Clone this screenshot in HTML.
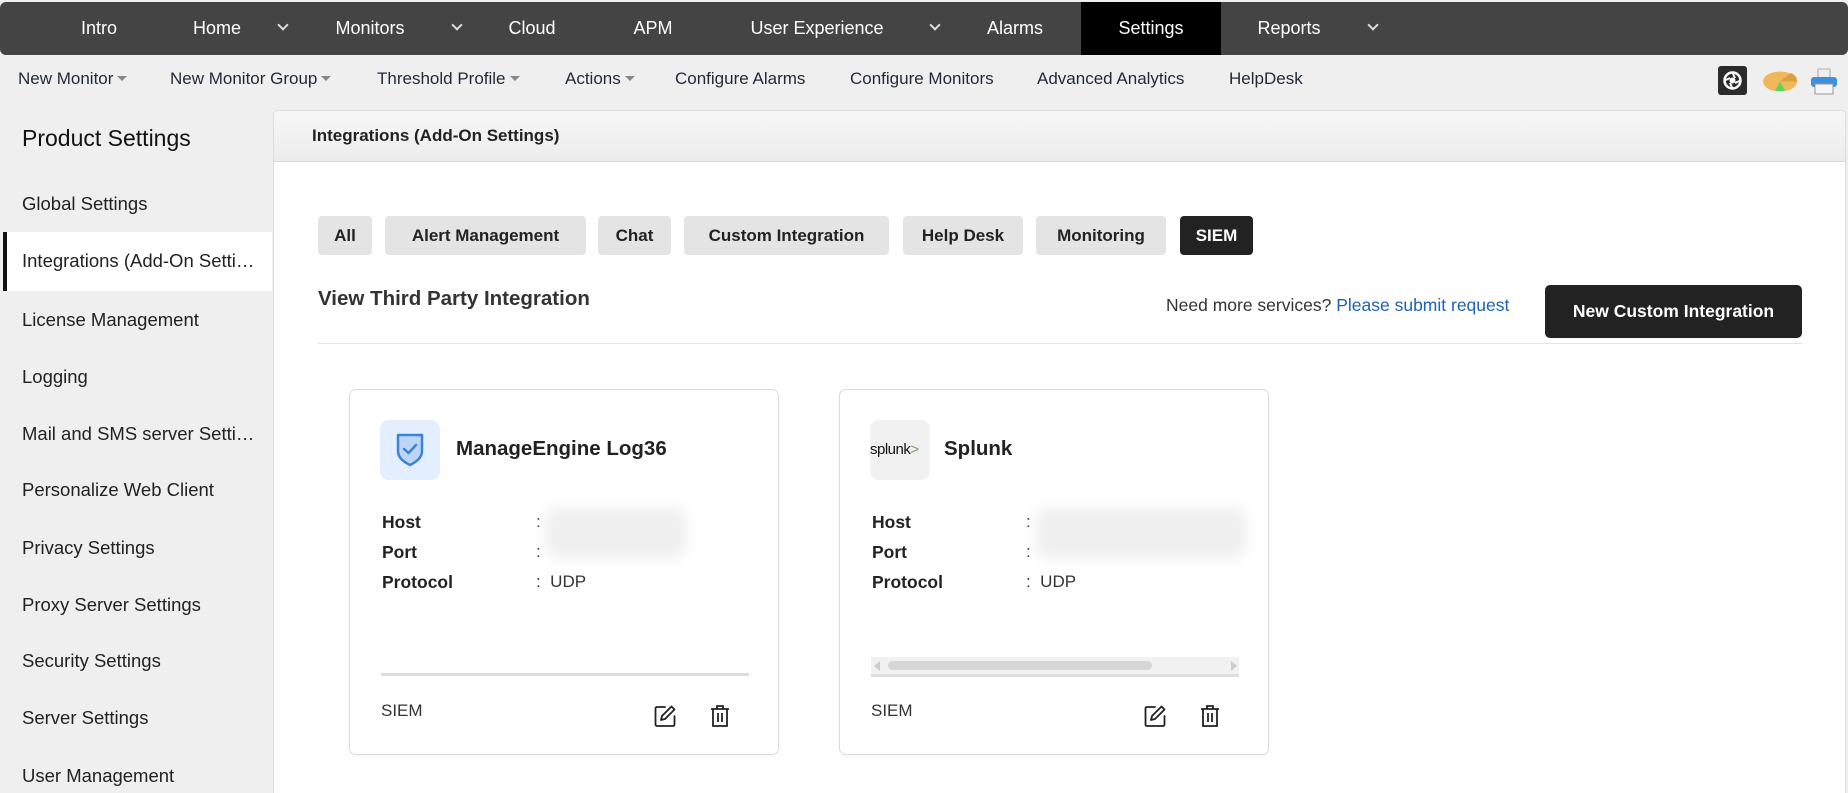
<!DOCTYPE html>
<html><head><meta charset="utf-8">
<style>
*{margin:0;padding:0;box-sizing:border-box}
html,body{width:1848px;height:793px;overflow:hidden}
body{background:#efefef;font-family:"Liberation Sans",Arial,sans-serif;position:relative;color:#222}
.a{position:absolute;white-space:nowrap}
#top{position:absolute;left:0;top:2px;width:1848px;height:53px;background:#444;border-radius:6px}
.tn{position:absolute;top:0;height:53px;line-height:53px;color:#fff;font-size:18px;transform:translateX(-50%)}
.chev{position:absolute;top:22px;width:8px;height:8px;border-right:2px solid #ddd;border-bottom:2px solid #ddd;transform:rotate(45deg)}
.n2{position:absolute;top:69px;font-size:17px;color:#1f2a36}
.tri{display:inline-block;width:0;height:0;border-left:5px solid transparent;border-right:5px solid transparent;border-top:5px solid #888;margin-left:4px;vertical-align:3px}
.si{position:absolute;left:22px;font-size:18.5px;color:#222}
.tab{position:absolute;top:216px;height:39px;line-height:39px;background:#e4e4e4;border-radius:4px;font-weight:bold;font-size:17px;color:#222;text-align:center}
.card{position:absolute;top:389px;width:430px;height:366px;background:#fff;border:1px solid #ddd;border-radius:7px;box-shadow:0 1px 3px rgba(0,0,0,.06)}
.lb{position:absolute;left:32px;font-weight:bold;font-size:17.5px;color:#222}
.cl{position:absolute;left:186px;font-size:17px;color:#333}
.blur{position:absolute;top:118px;height:50px;background:#efefef;filter:blur(7px);border-radius:10px}
</style></head><body>
<div id="top">
 <div class="tn" style="left:99px">Intro</div>
 <div class="tn" style="left:217px">Home</div><div class="chev" style="left:279px;top:19px"></div>
 <div class="tn" style="left:370px">Monitors</div><div class="chev" style="left:453px;top:19px"></div>
 <div class="tn" style="left:532px">Cloud</div>
 <div class="tn" style="left:653px">APM</div>
 <div class="tn" style="left:817px">User Experience</div><div class="chev" style="left:931px;top:19px"></div>
 <div class="tn" style="left:1015px">Alarms</div>
 <div style="position:absolute;left:1081px;top:0;width:140px;height:53px;background:#000"></div>
 <div class="tn" style="left:1151px">Settings</div>
 <div class="tn" style="left:1289px">Reports</div><div class="chev" style="left:1369px;top:19px"></div>
</div>
<div class="n2" style="left:18px">New Monitor<span class="tri"></span></div>
<div class="n2" style="left:170px">New Monitor Group<span class="tri"></span></div>
<div class="n2" style="left:377px">Threshold Profile<span class="tri"></span></div>
<div class="n2" style="left:565px">Actions<span class="tri"></span></div>
<div class="n2" style="left:675px">Configure Alarms</div>
<div class="n2" style="left:850px">Configure Monitors</div>
<div class="n2" style="left:1037px">Advanced Analytics</div>
<div class="n2" style="left:1229px">HelpDesk</div>
<div class="a" style="left:1718px;top:66px;width:29px;height:29px;background:#2b2b2b;border-radius:3px">
 <svg width="29" height="29" viewBox="0 0 29 29"><circle cx="14.5" cy="14.5" r="8" fill="none" stroke="#fff" stroke-width="2.5"/><circle cx="14.5" cy="14.5" r="3" fill="#fff"/><path d="M14.5 6.5L17 12M22.5 14.5L17 17M14.5 22.5L12 17M6.5 14.5L12 12" stroke="#fff" stroke-width="2"/></svg></div>
<div class="a" style="left:1763px;top:70px"><svg width="35" height="23"><ellipse cx="17" cy="11.5" rx="17" ry="10" fill="#f0b85a"/><path d="M17 11.5L12 21L22 21Z" fill="#5fd35f"/><path d="M17 11.5L34 11.5A17 10 0 0 0 28 3Z" fill="#d9a040"/></svg></div>
<div class="a" style="left:1810px;top:68px"><svg width="28" height="27"><rect x="8" y="1" width="12" height="9" fill="#eee" stroke="#aaa"/><rect x="1" y="9" width="26" height="10" rx="3" fill="#3f8fdc"/><rect x="5" y="16" width="18" height="10" fill="#f5f5f5" stroke="#999"/></svg></div>

<div class="a" style="left:22px;top:125px;font-size:23px;color:#111">Product Settings</div>
<div class="a" style="left:3px;top:232px;width:269px;height:59px;background:#fff;border-left:4px solid #111"></div>
<div class="si" style="top:193px">Global Settings</div>
<div class="si" style="top:250px">Integrations (Add-On Setti…</div>
<div class="si" style="top:309px">License Management</div>
<div class="si" style="top:366px">Logging</div>
<div class="si" style="top:423px">Mail and SMS server Setti…</div>
<div class="si" style="top:479px">Personalize Web Client</div>
<div class="si" style="top:537px">Privacy Settings</div>
<div class="si" style="top:594px">Proxy Server Settings</div>
<div class="si" style="top:650px">Security Settings</div>
<div class="si" style="top:707px">Server Settings</div>
<div class="si" style="top:765px">User Management</div>

<div class="a" style="left:273px;top:110px;width:1573px;height:683px;background:#fff;border:1px solid #ddd;border-bottom:none;border-radius:5px 5px 0 0"></div>
<div class="a" style="left:274px;top:111px;width:1571px;height:51px;background:linear-gradient(#f7f7f7,#ececec);border-bottom:1px solid #d8d8d8;border-radius:5px 5px 0 0"></div>
<div class="a" style="left:312px;top:126px;font-size:17px;font-weight:bold;color:#222">Integrations (Add-On Settings)</div>

<div class="tab" style="left:318px;width:54px">All</div>
<div class="tab" style="left:385px;width:201px">Alert Management</div>
<div class="tab" style="left:598px;width:73px">Chat</div>
<div class="tab" style="left:684px;width:205px">Custom Integration</div>
<div class="tab" style="left:903px;width:120px">Help Desk</div>
<div class="tab" style="left:1036px;width:130px">Monitoring</div>
<div class="tab" style="left:1180px;width:73px;background:#222;color:#fff">SIEM</div>

<div class="a" style="left:318px;top:287px;font-size:20.5px;font-weight:bold;color:#333">View Third Party Integration</div>
<div class="a" style="left:1166px;top:295px;font-size:17.5px;color:#333">Need more services? <span style="color:#1f63b0">Please submit request</span></div>
<div class="a" style="left:1545px;top:285px;width:257px;height:53px;line-height:53px;background:#222;color:#fff;border-radius:5px;text-align:center;font-weight:bold;font-size:17.5px">New Custom Integration</div>
<div class="a" style="left:318px;top:343px;width:1484px;height:1px;background:#e3e3e3"></div>

<div class="card" style="left:349px">
 <div class="a" style="left:30px;top:30px;width:60px;height:60px;background:#e3efff;border-radius:9px">
  <svg width="60" height="60" viewBox="0 0 60 60"><path d="M18 15H42V31C42 38 36 42 30 45C24 42 18 38 18 31Z" fill="#bcd6f7" stroke="#3d82d8" stroke-width="2.5" stroke-linejoin="round"/><path d="M24 29L28.5 33L36 25" fill="none" stroke="#3d82d8" stroke-width="2.5" stroke-linecap="round" stroke-linejoin="round"/></svg></div>
 <div class="a" style="left:106px;top:47px;font-size:20.5px;font-weight:bold;color:#222">ManageEngine Log36</div>
 <div class="lb" style="top:122px">Host</div><div class="lb" style="top:152px">Port</div><div class="lb" style="top:182px">Protocol</div>
 <div class="cl" style="top:122px">:</div><div class="cl" style="top:152px">:</div><div class="cl" style="top:182px">: &nbsp;UDP</div>
 <div class="blur" style="left:196px;width:140px"></div>
 <div class="a" style="left:31px;top:283px;width:368px;height:3px;background:#ddd"></div>
 <div class="a" style="left:31px;top:311px;font-size:17px;color:#333">SIEM</div>
 <svg class="a" style="left:303px;top:314px" width="24" height="24" viewBox="0 0 24 24" fill="none" stroke="#222" stroke-width="1.8" stroke-linejoin="round" stroke-linecap="round"><path d="M12 3H4a1.5 1.5 0 0 0-1.5 1.5v16A1.5 1.5 0 0 0 4 22h16a1.5 1.5 0 0 0 1.5-1.5V12"/><path d="M18.5 2.5l3 3L12 15l-4 1 1-4z"/></svg>
 <svg class="a" style="left:359px;top:314px" width="22" height="24" viewBox="0 0 22 24" fill="none" stroke="#222" stroke-width="1.8"><path d="M2 5H20M8 5V2H14V5M4 5V22H18V5M9 9V18M13 9V18"/></svg>
</div>

<div class="card" style="left:839px">
 <div class="a" style="left:30px;top:30px;width:60px;height:60px;background:#f1f1f1;border-radius:9px;font-size:15px;line-height:60px;letter-spacing:-.5px;color:#111">splunk<span style="color:#7a9a6a">&gt;</span></div>
 <div class="a" style="left:104px;top:47px;font-size:20.5px;font-weight:bold;color:#222">Splunk</div>
 <div class="lb" style="top:122px">Host</div><div class="lb" style="top:152px">Port</div><div class="lb" style="top:182px">Protocol</div>
 <div class="cl" style="top:122px">:</div><div class="cl" style="top:152px">:</div><div class="cl" style="top:182px">: &nbsp;UDP</div>
 <div class="blur" style="left:196px;width:210px"></div>
 <div class="a" style="left:31px;top:267px;width:368px;height:17px;background:#f1f1f1"></div>
 <div class="a" style="left:48px;top:271px;width:264px;height:9px;background:#d6d6d6;border-radius:5px"></div>
 <div class="a" style="left:34px;top:271px;width:0;height:0;border-top:5px solid transparent;border-bottom:5px solid transparent;border-right:6px solid #ccc"></div>
 <div class="a" style="left:391px;top:271px;width:0;height:0;border-top:5px solid transparent;border-bottom:5px solid transparent;border-left:6px solid #ccc"></div>
 <div class="a" style="left:31px;top:284px;width:368px;height:3px;background:#ddd"></div>
 <div class="a" style="left:31px;top:311px;font-size:17px;color:#333">SIEM</div>
 <svg class="a" style="left:303px;top:314px" width="24" height="24" viewBox="0 0 24 24" fill="none" stroke="#222" stroke-width="1.8" stroke-linejoin="round" stroke-linecap="round"><path d="M12 3H4a1.5 1.5 0 0 0-1.5 1.5v16A1.5 1.5 0 0 0 4 22h16a1.5 1.5 0 0 0 1.5-1.5V12"/><path d="M18.5 2.5l3 3L12 15l-4 1 1-4z"/></svg>
 <svg class="a" style="left:359px;top:314px" width="22" height="24" viewBox="0 0 22 24" fill="none" stroke="#222" stroke-width="1.8"><path d="M2 5H20M8 5V2H14V5M4 5V22H18V5M9 9V18M13 9V18"/></svg>
</div>
</body></html>
